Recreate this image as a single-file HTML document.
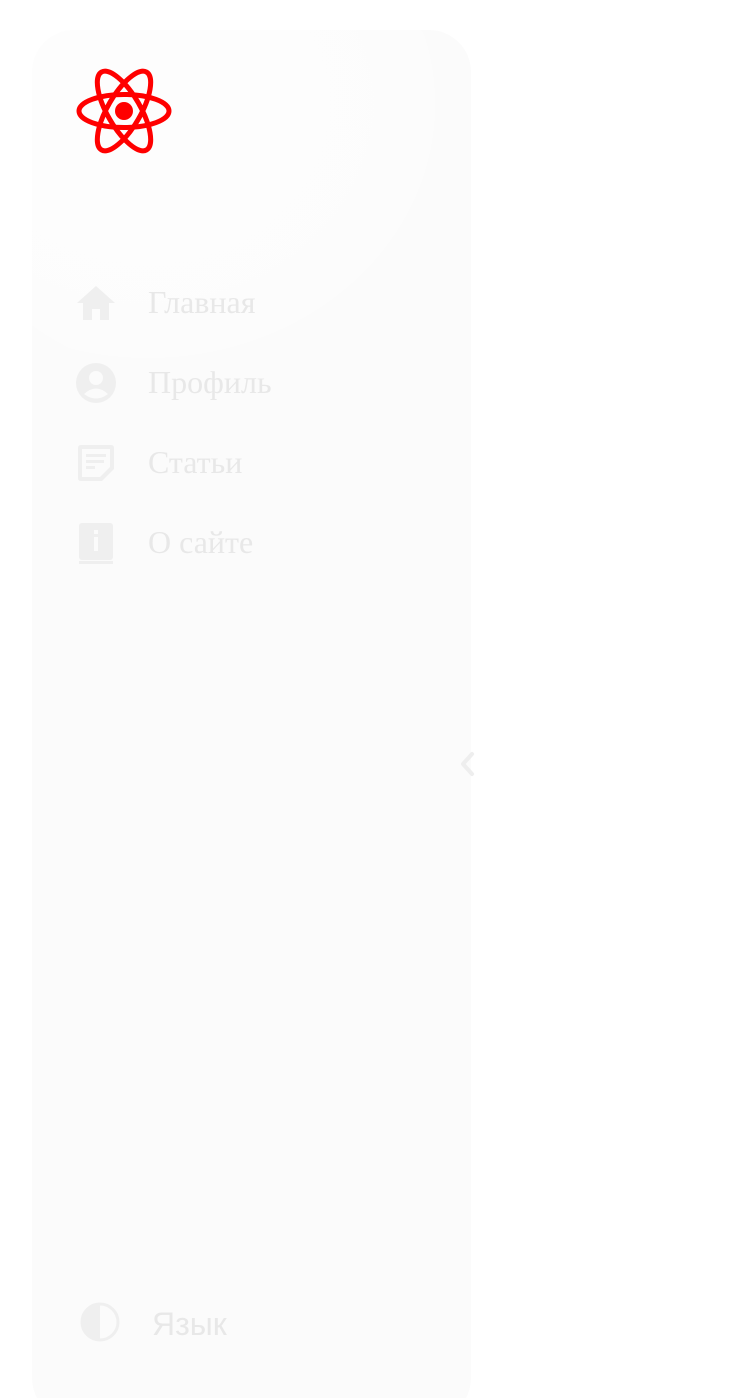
<!DOCTYPE html>
<html><head><meta charset="utf-8"><style>
html,body{margin:0;padding:0;background:#fff;width:750px;height:1398px;overflow:hidden;position:relative}
.glow{position:absolute;left:-60px;top:-80px;width:520px;height:460px;border-radius:50%;background:radial-gradient(ellipse at 40% 40%,rgba(255,255,255,.6) 0%,rgba(255,255,255,.4) 50%,rgba(255,255,255,0) 72%);}
.panel{position:absolute;left:32px;top:30px;width:439px;height:1390px;background:#fbfbfb;border-radius:42px;}
.item{position:absolute;left:148px;font-family:"Liberation Serif",serif;font-size:32px;color:#e8e8e8;line-height:1}
svg{position:absolute}
</style></head><body>
<div class="panel"></div>
<div class="glow"></div>
<svg style="left:74px;top:66px" width="100" height="92" viewBox="0 0 100 92">
<g fill="none" stroke="#f00" stroke-width="5">
<ellipse cx="50" cy="45" rx="45" ry="16.5"/>
<ellipse cx="50" cy="45" rx="45" ry="16.5" transform="rotate(60 50 45)"/>
<ellipse cx="50" cy="45" rx="45" ry="16.5" transform="rotate(-60 50 45)"/>
</g><circle cx="50" cy="45" r="9" fill="#f00"/></svg>
<svg style="left:76px;top:284px" width="40" height="38" viewBox="0 0 40 38"><path d="M20 2 L39 19 H33 V36 H24 V25 H16 V36 H7 V19 H1 Z" fill="#efefef"/></svg>
<div class="item" style="top:286px">Главная</div>
<svg style="left:76px;top:363px" width="40" height="40" viewBox="0 0 40 40"><circle cx="20" cy="20" r="20" fill="#efefef"/><circle cx="20" cy="15" r="7" fill="#fbfbfb"/><path d="M8 31 Q20 20 32 31 Q20 40 8 31Z" fill="#fbfbfb"/></svg>
<div class="item" style="top:366px">Профиль</div>
<svg style="left:78px;top:445px" width="36" height="36" viewBox="0 0 36 36"><path d="M3 0 H33 Q36 0 36 3 V24 L24 36 H3 Q0 36 0 33 V3 Q0 0 3 0Z" fill="#efefef"/><path d="M4 4 H32 V22 L22 32 H4Z" fill="#fbfbfb"/><rect x="8" y="9" width="20" height="3" fill="#efefef"/><rect x="8" y="15" width="18" height="3" fill="#efefef"/><rect x="8" y="21" width="9" height="3" fill="#efefef"/></svg>
<div class="item" style="top:446px">Статьи</div>
<svg style="left:79px;top:523px" width="34" height="42" viewBox="0 0 34 42"><rect x="0" y="0" width="34" height="37" rx="3" fill="#efefef"/><rect x="0" y="38" width="34" height="3" fill="#efefef"/><rect x="15" y="14" width="4" height="14" fill="#fbfbfb"/><rect x="15" y="7" width="4" height="4" fill="#fbfbfb"/></svg>
<div class="item" style="top:526px">О сайте</div>
<svg style="left:458px;top:750px" width="20" height="28" viewBox="0 0 20 28"><path d="M14 4 L5 14 L14 24" fill="none" stroke="#eee" stroke-width="4" stroke-linecap="round" stroke-linejoin="round"/></svg>
<svg style="left:80px;top:1302px" width="40" height="40" viewBox="0 0 40 40"><circle cx="20" cy="20" r="18" fill="none" stroke="#efefef" stroke-width="3"/><path d="M20 2 A18 18 0 0 0 20 38Z" fill="#efefef"/></svg>
<div class="item" style="left:152px;top:1308px;font-family:'Liberation Sans',sans-serif;font-size:32px">Язык</div>
</body></html>
